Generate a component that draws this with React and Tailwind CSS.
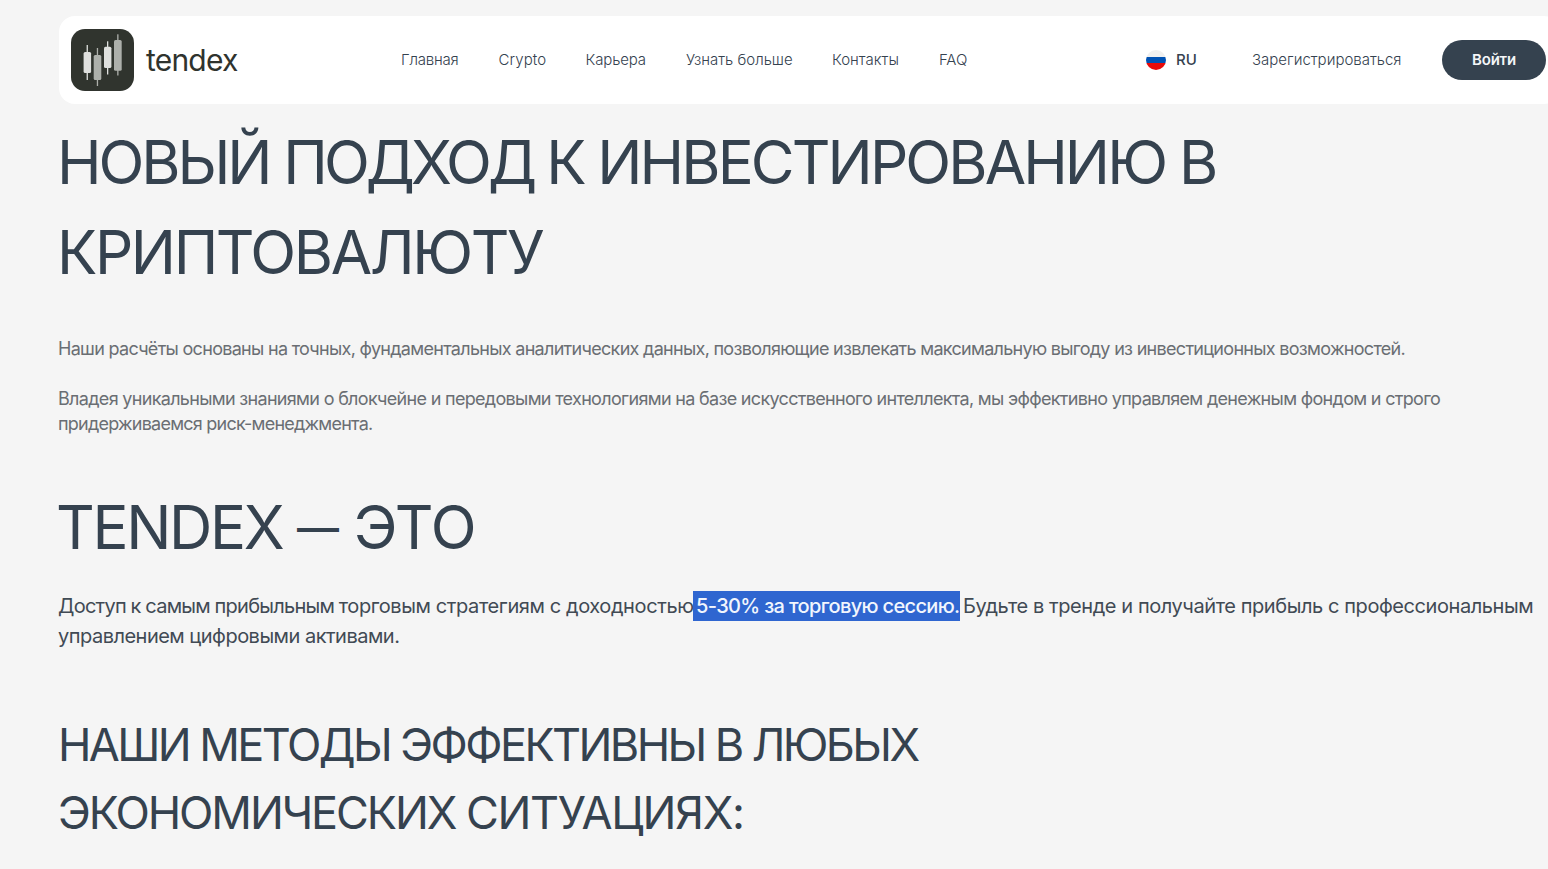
const links = [
  { label: 'Главная', style: 'tracking-[-0.2px] w-[57.5px]' },
  { label: 'Crypto', style: 'tracking-[0.1px] w-[47px]' },
  { label: 'Карьера', style: 'tracking-[-0.15px] w-[60.5px]' },
  { label: 'Узнать больше', style: 'tracking-[0px] w-[106px]' },
  { label: 'Контакты', style: 'tracking-[0px] w-[67px]' },
  { label: 'FAQ', style: 'tracking-[-0.1px] w-7' },
];

function Logo() {
  return (
    <a href="#" className="flex items-center">
      <svg width="63" height="62" viewBox="0 0 63 62" className="shrink-0">
        <rect width="63" height="62" rx="14" fill="#30342e" />
        <g fill="#dfe0de">
          <rect x="15.6" y="16" width="1.3" height="35" />
          <rect x="12.6" y="23" width="7.5" height="21" rx="1.5" />
          <rect x="36" y="12.3" width="1.3" height="33.2" />
          <rect x="33" y="17.7" width="7.4" height="21.3" rx="1.5" />
        </g>
        <g fill="#adb0ab">
          <rect x="25.8" y="19" width="1.3" height="38" />
          <rect x="22.7" y="26" width="7.6" height="25" rx="1.5" />
          <rect x="46.2" y="5.3" width="1.3" height="41.2" />
          <rect x="43" y="11" width="7.7" height="30.7" rx="1.5" />
        </g>
      </svg>
      <span className="ml-3 w-[92px] text-[30px] leading-none tracking-[-0.8px] text-[#2f332e]">tendex</span>
    </a>
  );
}

function Flag() {
  return (
    <span className="flex h-5 w-5 flex-col overflow-hidden rounded-full">
      <span className="flex-1 bg-[#f0f0f0]" />
      <span className="flex-1 bg-[#0052b4]" />
      <span className="flex-1 bg-[#e80a0a]" />
    </span>
  );
}

function Header() {
  return (
    <header className="flex h-22 w-[1501px] items-center rounded-2xl bg-white pl-3 text-[15px] whitespace-nowrap text-[#35424f]">
      <Logo />
      <nav className="ml-[163px] flex gap-10 font-[350]">
        {links.map((link) => (
          <a key={link.label} href="#" className={link.style}>
            {link.label}
          </a>
        ))}
      </nav>
      <button className="ml-[179px] flex w-[106px] items-center gap-2.5 text-[15px] font-medium">
        <Flag />
        RU
      </button>
      <a href="#" className="w-[150px] font-[350] tracking-[0px]">Зарегистрироваться</a>
      <button className="ml-10 h-10 w-[104px] rounded-full bg-[#35424f] text-[15px] font-semibold tracking-[-0.2px] text-[#f4f6f8]">
        Войти
      </button>
    </header>
  );
}

export default function App() {
  return (
    <div className="h-[869px] overflow-hidden bg-[#f5f5f5] pt-4 pl-[59px] font-[Inter,sans-serif] text-[#35424f]">
      <Header />
      <main className="whitespace-nowrap">
        <h1 className="-ml-0.5 mt-[13px] text-[60px] leading-[90px]">
          <span className="block tracking-[-3.1px]">
            НОВЫЙ <span className="tracking-[-3.9px]">ПОДХОД </span>К <span className="tracking-[-2.9px]">ИНВЕСТИРОВАНИЮ </span>В
          </span>
          <span className="block tracking-[-2.4px]">КРИПТОВАЛЮТУ</span>
        </h1>
        <div className="-ml-px mt-[39px] text-lg leading-[25px] text-[#6a6e73]">
          <p className="tracking-[-0.7px]">
            Наши расчёты основаны на точных, фундаментальных аналитических данных, позволяющие извлекать максимальную выгоду из инвестиционных возможностей.
          </p>
          <p className="mt-[25px]">
            <span className="block tracking-[-0.68px]">
              Владея уникальными знаниями о блокчейне и передовыми технологиями на базе искусственного интеллекта, мы эффективно управляем денежным фондом и строго
            </span>
            <span className="block tracking-[-0.77px]">придерживаемся риск-менеджмента.</span>
          </p>
        </div>
        <h2 className="-ml-[3px] mt-[46px] text-[60px] leading-[90px] tracking-[-2.3px]">
          TENDEX <span className="align-[6px] text-[42px] leading-none font-medium tracking-normal">—</span>{' '}
          <span className="tracking-[-1px]">ЭТО</span>
        </h2>
        <p className="-ml-px mt-[19px] text-xl leading-[30px] text-[#414a54]">
          <span className="flex">
            <span className="w-[635px] tracking-[-0.4px]">
              <span className="tracking-[-0.74px] [word-spacing:-0.3px]">Доступ к самым прибыльным </span>
              торговым стратегиям с доходностью
            </span>
            <span className="w-[267px] bg-[#2f66d0] pl-[3px] font-medium tracking-[-0.65px] text-[#f2f6fd]">5-30% за торговую сессию.</span>
            <span className="pl-[3px] tracking-[-0.42px]">Будьте в тренде и получайте прибыль с профессиональным</span>
          </span>
          <span className="block tracking-[-0.51px]">управлением цифровыми активами.</span>
        </p>
        <h3 className="-ml-px mt-[60px] text-[45px] leading-[67.5px]">
          <span className="block tracking-[-2.58px]">НАШИ МЕТОДЫ ЭФФЕКТИВНЫ В ЛЮБЫХ</span>
          <span className="block tracking-[-1.3px]">
            <span className="tracking-[-2.1px]">ЭКОНОМИЧЕСКИХ </span>СИТУАЦИЯХ:
          </span>
        </h3>
      </main>
    </div>
  );
}
